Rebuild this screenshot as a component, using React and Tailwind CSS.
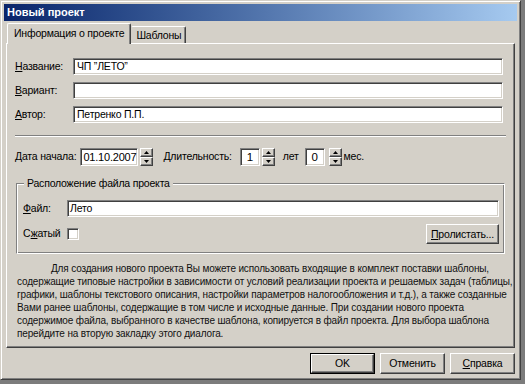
import React from 'react';

const font = { fontFamily: '"Liberation Sans", "DejaVu Sans", sans-serif' };

const sunken =
  'bg-white border border-t-[#808080] border-l-[#808080] border-b-white border-r-white shadow-[inset_1px_1px_0_#404040,inset_-1px_-1px_0_#d4d0c8]';
const raised =
  'bg-[#d4d0c8] border border-t-white border-l-white border-b-[#404040] border-r-[#404040] shadow-[inset_-1px_-1px_0_#808080]';

function U({ children }) {
  return <span className="underline">{children}</span>;
}

function Spinner() {
  return (
    <div className="flex flex-col w-[13px] h-[18px]">
      <div className={`${raised} flex-1 flex items-center justify-center`}>
        <svg width="5" height="3" viewBox="0 0 5 3"><path d="M2.5 0 L5 3 L0 3 Z" fill="#000" /></svg>
      </div>
      <div className={`${raised} flex-1 flex items-center justify-center`}>
        <svg width="5" height="3" viewBox="0 0 5 3"><path d="M0 0 L5 0 L2.5 3 Z" fill="#000" /></svg>
      </div>
    </div>
  );
}

function Field({ label, value }) {
  return (
    <div className="flex items-center h-[17px]">
      <span className="w-[58px]">{label}</span>
      <div className={`${sunken} flex-1 h-[17px] px-[3px] leading-[15px]`}>{value}</div>
    </div>
  );
}

export default function App() {
  return (
    <div className="w-[525px] h-[384px] bg-[#7c7c7c] text-[10.5px] tracking-[-0.2px] text-black overflow-hidden" style={font}>
      <div className="w-[521px] h-[380px] bg-[#d4d0c8] border border-t-[#d4d0c8] border-l-[#d4d0c8] border-b-[#404040] border-r-[#404040] shadow-[inset_1px_1px_0_white,inset_-1px_-1px_0_#808080] p-[3px] flex flex-col">
        {/* title bar */}
        <div className="h-[17px] bg-gradient-to-r from-[#0a246a] to-[#a6caf0] text-white font-bold text-[11px] tracking-[0px] leading-[17px] pl-[3px]">
          Новый проект
        </div>

        {/* tabs */}
        <div className="flex items-end h-[22px] pl-[3px] mt-[1px]">
          <div className="relative z-10 h-[21px] px-[6px] leading-[18px] bg-[#d4d0c8] border border-b-0 border-t-white border-l-white border-r-[#404040] rounded-t-[2px] shadow-[inset_-1px_0_0_#808080]">
            Информация о проекте
          </div>
          <div className="h-[18px] px-[4px] leading-[16px] bg-[#d4d0c8] border border-b-0 border-t-white border-l-[#d4d0c8] border-r-[#404040] rounded-t-[2px] shadow-[inset_-1px_0_0_#808080]">
            Шаблоны
          </div>
        </div>

        {/* panel */}
        <div className="-mt-[1px] mx-[2px] h-[305px] border border-t-white border-l-white border-b-[#404040] border-r-[#404040] shadow-[inset_-1px_-1px_0_#808080] flex flex-col pt-[14px] px-[8px]">
          <div className="flex flex-col gap-[7px] pr-[3px]">
            <Field label={<><U>Н</U>азвание:</>} value={'ЧП ”ЛЕТО”'} />
            <Field label={<><U>В</U>ариант:</>} value="" />
            <Field label={<><U>А</U>втор:</>} value="Петренко П.П." />
          </div>

          <div className="mt-[12px] border-t border-t-[#808080] border-b border-b-white" />

          <div className="flex items-center mt-[11px] h-[18px]">
            <span>Дата начала:</span>
            <div className={`${sunken} ml-[4px] w-[58px] h-[18px] text-[11px] leading-[16px] px-[2px]`}>01.10.2007</div>
            <div className="ml-[2px]"><Spinner /></div>
            <span className="ml-[10px]"><U>Д</U>лительность:</span>
            <div className={`${sunken} ml-[8px] w-[20px] h-[18px] text-[11.5px] leading-[16px] text-center`}>1</div>
            <div className="ml-[2px]"><Spinner /></div>
            <span className="ml-[8px]">лет</span>
            <div className={`${sunken} ml-[6px] w-[20px] h-[18px] text-[11.5px] leading-[16px] text-center`}>0</div>
            <div className="ml-[4px]"><Spinner /></div>
            <span className="ml-[2px]">мес.</span>
          </div>

          <div className="relative mt-[17px] mx-[1px] h-[71px] border border-t-[#808080] border-l-[#808080] border-b-white border-r-white shadow-[inset_1px_1px_0_white,inset_-1px_-1px_0_#808080] pl-[6px] pr-[5px] pt-[16px]">
            <span className="absolute -top-[8px] left-[7px] bg-[#d4d0c8] px-[3px]">Расположение файла проекта</span>
            <div className="flex items-center h-[17px]">
              <span className="w-[44px]"><U>Ф</U>айл:</span>
              <div className={`${sunken} flex-1 h-[17px] px-[2px] leading-[15px]`}>Лето</div>
            </div>
            <div className="flex items-center mt-[7px] h-[20px]">
              <span className="w-[44px]">С<U>ж</U>атый</span>
              <div className={`${sunken} w-[12px] h-[12px]`} />
              <div className="flex-1" />
              <div className={`${raised} w-[73px] h-[20px] leading-[18px] text-center`}><U>П</U>ролистать...</div>
            </div>
          </div>

          <p className="mt-[8px] px-[2px] text-[10px] leading-[13px] whitespace-nowrap tracking-[-0.15px] text-[#111]">
            <span className="pl-[34px]">Для создания нового проекта Вы можете использовать входящие в комплект поставки шаблоны,</span><br />
            содержащие типовые настройки в зависимости от условий реализации проекта и решаемых задач (таблицы,<br />
            графики, шаблоны текстового описания, настройки параметров налогообложения и т.д.), а также созданные<br />
            Вами ранее шаблоны, содержащие в том числе и исходные данные. При создании нового проекта<br />
            содержимое файла, выбранного в качестве шаблона, копируется в файл проекта. Для выбора шаблона<br />
            перейдите на вторую закладку этого диалога.
          </p>
        </div>

        {/* buttons */}
        <div className="flex justify-end gap-[5px] mt-[5px] pr-[2px]">
          <div className="border border-black">
            <div className={`${raised} w-[63px] h-[19px] leading-[17px] text-center`}>OK</div>
          </div>
          <div className={`${raised} w-[65px] h-[21px] leading-[19px] text-center`}>Отменить</div>
          <div className={`${raised} w-[65px] h-[21px] leading-[19px] text-center`}><U>С</U>правка</div>
        </div>
      </div>
    </div>
  );
}
